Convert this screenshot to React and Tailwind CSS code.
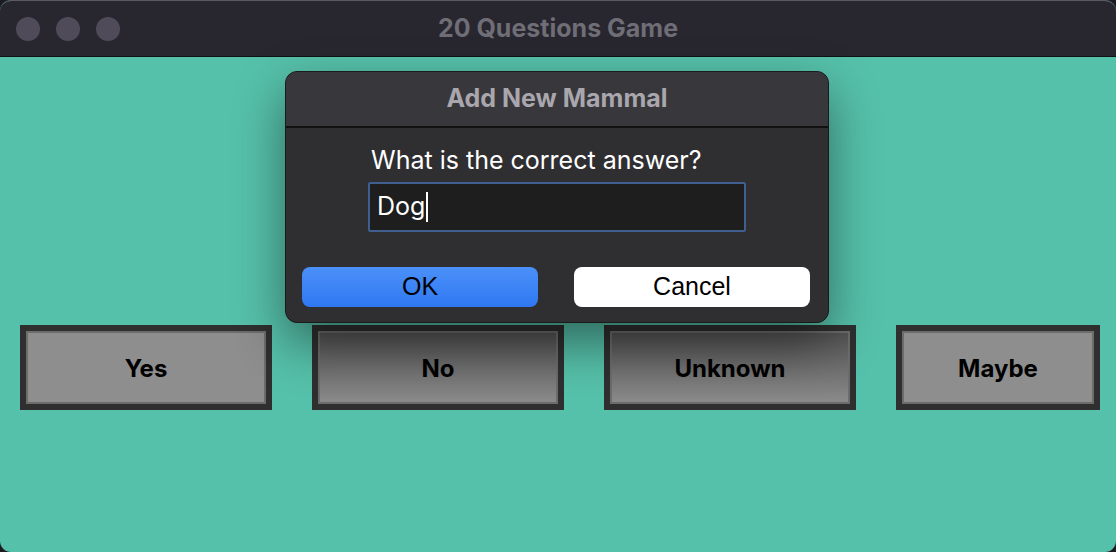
import React from 'react';

const GameButton = ({ label, width, shaded }) => (
  <div
    className={`flex h-[85px] items-center justify-center border-[6px] border-[#2f2f2f] ${width}`}
  >
    <div
      className={`flex h-full w-full items-center justify-center border-2 border-[#6c6c6c] pt-[3px] ${
        shaded ? 'bg-gradient-to-b from-[#545454] to-[#8a8a8a]' : 'bg-[#8e8e8e]'
      }`}
    >
      <span className="text-[24px] font-bold text-black">{label}</span>
    </div>
  </div>
);

export default function App() {
  return (
    <div className="h-[552px] w-[1116px] bg-[#1c1b20] font-['Inter',sans-serif]">
      <div className="relative flex h-full w-full flex-col overflow-hidden rounded-[11px] border-t border-[#5b5a62] bg-[#56c1aa]">
        {/* Title bar */}
        <div className="relative flex h-[56px] shrink-0 items-center border-b border-[#111] bg-[#28262f]">
          <div className="flex gap-4 pl-4">
            <div className="h-6 w-6 rounded-full bg-[#4f4b58]" />
            <div className="h-6 w-6 rounded-full bg-[#4f4b58]" />
            <div className="h-6 w-6 rounded-full bg-[#4f4b58]" />
          </div>
          <div className="absolute inset-0 flex items-center justify-center">
            <span className="text-[25px] font-bold text-[#6f6d76]">20 Questions Game</span>
          </div>
        </div>

        {/* Body */}
        <div className="flex flex-1 items-start pl-5 pr-4 pt-[268px]">
          <div className="flex gap-10">
            <GameButton label="Yes" width="w-[252px]" />
            <GameButton label="No" width="w-[252px]" shaded />
            <GameButton label="Unknown" width="w-[252px]" shaded />
            <GameButton label="Maybe" width="w-[204px]" />
          </div>
        </div>

        {/* Dialog */}
        <div className="absolute left-[285px] top-[70px] flex h-[252px] w-[544px] flex-col overflow-hidden rounded-[12px] border border-[#1a1a1a] bg-[#2f2e31] shadow-[0_20px_50px_rgba(0,0,0,0.45)]">
          <div className="flex h-[56px] shrink-0 items-center justify-center border-b-2 border-[#111] bg-[#38373b]">
            <span className="text-[25px] font-bold text-[#a9a7ad]">Add New Mammal</span>
          </div>
          <div className="flex flex-col pl-[82px] pt-[17px]">
            <span className="pl-[3px] text-[25px] leading-[30px] text-white">What is the correct answer?</span>
            <div className="mt-[7px] flex h-[50px] w-[378px] items-center rounded-[2px] border-2 border-[#3e5f8f] bg-[#1e1e1e] pl-[7px]">
              <span className="text-[25px] text-white">Dog</span>
              <span className="ml-[1px] h-[30px] w-[2px] bg-white" />
            </div>
          </div>
          <div className="flex gap-9 pl-4 pt-[35px]">
            <div className="flex h-[40px] w-[236px] items-center justify-center rounded-[8px] bg-gradient-to-b from-[#4b90f8] to-[#2f78f2]">
              <span className="font-['Liberation_Sans',sans-serif] text-[25px] text-black">OK</span>
            </div>
            <div className="flex h-[40px] w-[236px] items-center justify-center rounded-[8px] bg-white">
              <span className="font-['Liberation_Sans',sans-serif] text-[25px] text-black">Cancel</span>
            </div>
          </div>
        </div>
      </div>
    </div>
  );
}
